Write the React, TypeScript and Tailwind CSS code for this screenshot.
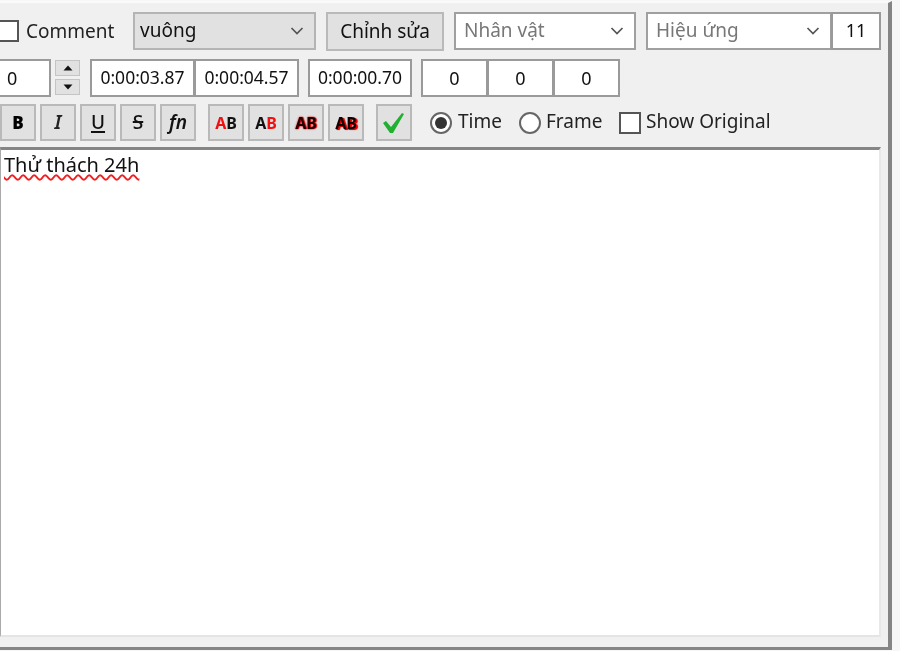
import React from "react";

const Chevron = () => (
  <svg width="14" height="8" viewBox="0 0 14 8" fill="none" className="shrink-0">
    <path d="M1.5 1 L7 6.5 L12.5 1" stroke="#555" strokeWidth="1.7" />
  </svg>
);

const Combo = ({ label, w, gray, muted }: { label: string; w: string; gray?: boolean; muted?: boolean }) => (
  <div className={`${w} h-[38px] flex items-center justify-between pr-[10px] border-2 ${gray ? "bg-[#e1e1e1] border-[#b4b4b4] pl-[5px]" : "bg-white border-[#a0a0a0] pl-[8px]"}`}>
    <span className={`text-[19px] ${muted ? "text-[#777] pb-[2px]" : "text-[#111] pb-[1px]"}`}>{label}</span>
    <Chevron />
  </div>
);

const Field = ({ v, w, cls = "" }: { v: string; w: string; cls?: string }) => (
  <div className={`${w} h-[38px] bg-white border-2 border-[#9a9a9a] flex items-center justify-center text-[#111] ${cls}`}>{v}</div>
);

const Tool = ({ children, cls = "" }: { children: React.ReactNode; cls?: string }) => (
  <div className={`w-[36px] h-[37px] bg-[#e1e1e1] border-2 border-[#b9b9b9] flex items-center justify-center shrink-0 ${cls}`}>{children}</div>
);

const Spin = ({ up }: { up?: boolean }) => (
  <div className="w-[25px] h-[16px] bg-[#e1e1e1] border border-[#c4c4c4] flex items-center justify-center">
    <svg width="10" height="6" viewBox="0 0 10 6">
      <path d={up ? "M5 0.5 L9.5 5.5 H0.5 Z" : "M5 5.5 L9.5 0.5 H0.5 Z"} fill="#111" />
    </svg>
  </div>
);

const Radio = ({ on }: { on?: boolean }) => (
  <div className="w-[22px] h-[22px] rounded-full border-2 border-[#666] bg-white flex items-center justify-center shrink-0">
    {on && <div className="w-[12px] h-[12px] rounded-full bg-[#333]" />}
  </div>
);

const Box = ({ cls = "" }: { cls?: string }) => <div className={`w-[22px] h-[22px] border-2 border-[#555] bg-white shrink-0 ${cls}`} />;

export default function App() {
  return (
    <div
      className="w-[900px] h-[651px] bg-[#f7f7f7] overflow-hidden text-[18px] leading-none blur-[0.65px]"
      style={{ fontFamily: '"Noto Sans", "Open Sans", sans-serif' }}
    >
      <div className="w-[892px] h-[649px] mt-[1px] bg-[#f0f0f0] border-r-[4px] border-b-[3px] border-[#858585] border-t-[2px] border-t-[#fafafa] pt-[9px] flex flex-col">
        {/* Row 1 */}
        <div className="flex items-start h-[39px]">
          <div className="flex items-center h-[38px] -ml-[3px]">
            <Box />
            <span className="ml-[7px] w-[107px] text-[19px] text-[#222]">Comment</span>
          </div>
          <Combo label="vuông" w="w-[183px]" gray />
          <div className="ml-[10px] w-[118px] h-[39px] bg-[#e1e1e1] border-2 border-[#b9b9b9] flex items-center justify-center text-[19px] text-[#111] pb-[1px]">Chỉnh sửa</div>
          <div className="ml-[10px]"><Combo label="Nhân vật" w="w-[182px]" muted /></div>
          <div className="ml-[10px]"><Combo label="Hiệu ứng" w="w-[186px]" muted /></div>
          <Field v="11" w="w-[50px]" cls="-ml-[1px] pb-[2px]" />
        </div>
        {/* Row 2 */}
        <div className="flex items-start mt-[8px] h-[38px]">
          <Field v="0" w="w-[51px]" cls="justify-start pl-[7px] border-l-0" />
          <div className="ml-[4px] flex flex-col gap-[3px] mt-[1px]">
            <Spin up />
            <Spin />
          </div>
          <Field v="0:00:03.87" w="w-[105px]" cls="ml-[10px] text-[17.5px]" />
          <Field v="0:00:04.57" w="w-[105px]" cls="-ml-[1px] text-[17.5px]" />
          <Field v="0:00:00.70" w="w-[104px]" cls="ml-[9px] text-[17.5px]" />
          <Field v="0" w="w-[67px]" cls="ml-[9px]" />
          <Field v="0" w="w-[67px]" cls="-ml-[1px]" />
          <Field v="0" w="w-[67px]" cls="-ml-[1px]" />
        </div>
        {/* Row 3 */}
        <div className="flex items-center mt-[7px] h-[37px] text-[#222] text-[19px]">
          <Tool><span className="font-black text-black text-[17px]">B</span></Tool>
          <div className="flex gap-[4px] ml-[4px]">
            <Tool><span className="italic font-semibold text-[#222]">I</span></Tool>
            <Tool><span className="underline decoration-2 underline-offset-2 font-medium text-[#111]">U</span></Tool>
            <Tool><span className="line-through decoration-2 font-medium text-[#111] px-[3px]">S</span></Tool>
            <Tool><span className="italic font-semibold text-[#111]">fn</span></Tool>
          </div>
          <div className="flex gap-[4px] ml-[12px] font-bold text-[16px]">
            <Tool><span className="text-[#111]"><span className="text-[#f01010]">A</span>B</span></Tool>
            <Tool><span className="text-[#111]">A<span className="text-[#f01010]">B</span></span></Tool>
            <Tool><span className="text-[#200] [text-shadow:0_0_2px_#e00000,1px_0_1px_#e00000]">AB</span></Tool>
            <Tool><span className="text-[#100] [text-shadow:1px_1px_0_#e00000,2px_1px_1px_#e00000]">AB</span></Tool>
          </div>
          <Tool cls="ml-[12px]">
            <svg width="24" height="24" viewBox="0 0 24 24">
              <path d="M1 12 L4 10 L9 16 L20 2 L22 3 L11 22 L8 22 Z" fill="#22b030" />
            </svg>
          </Tool>
          <div className="ml-[18px]"><Radio on /></div>
          <span className="ml-[6px] w-[61px] pb-[3px]">Time</span>
          <Radio />
          <span className="ml-[5px] w-[73px] pb-[3px]">Frame</span>
          <Box />
          <span className="ml-[5px] pb-[3px]">Show Original</span>
        </div>
        {/* Editor */}
        <div className="mt-[6px] w-[881px] h-[490px] bg-white border-t-[3px] border-t-[#858585] border-r-2 border-r-[#e8e8e8] border-b-2 border-b-[#e4e4e4] border-l-1 border-l-[#aaaaaa] pl-[3px] pt-[5px] text-[20px] text-[#111]">
          <span className="underline decoration-wavy decoration-[#ee2020] decoration-[1.5px] underline-offset-[2px]">Thử thách 24h</span>
        </div>
      </div>
    </div>
  );
}
